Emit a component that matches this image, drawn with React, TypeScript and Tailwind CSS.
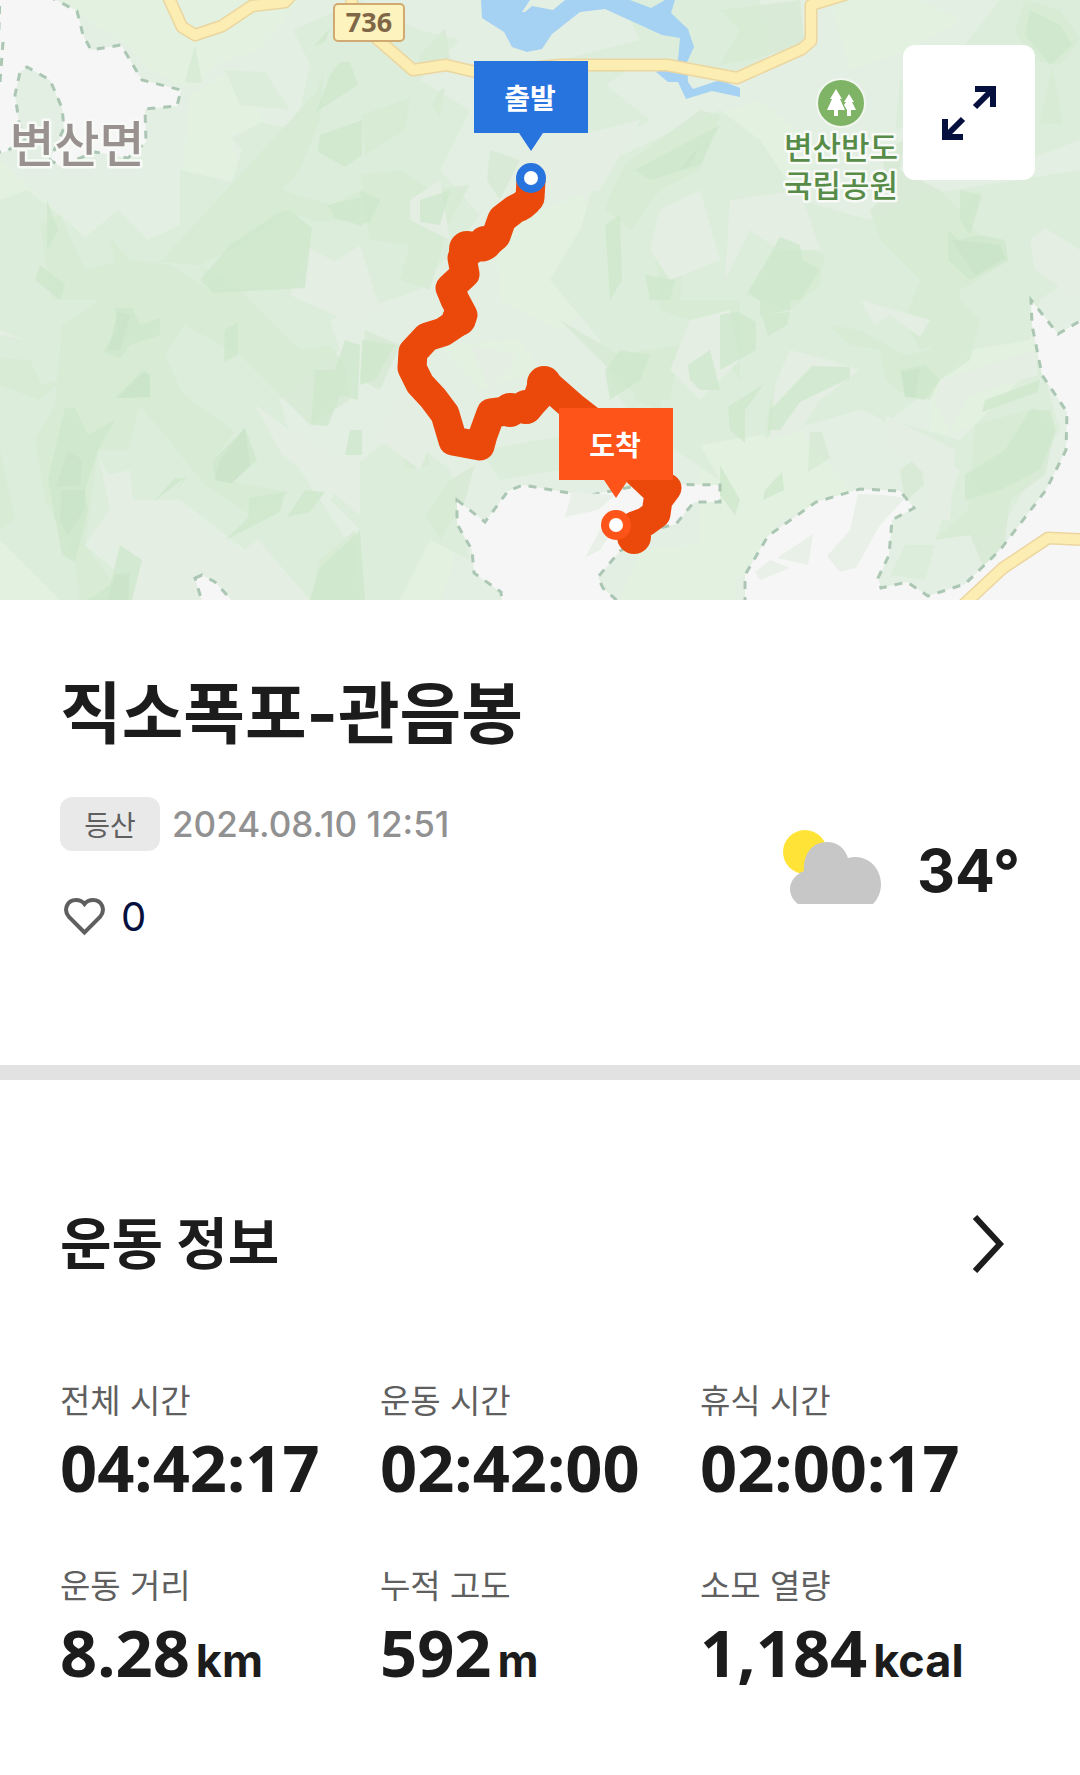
import { useState } from "react";

type Stat = { label: string; value: string; unit?: string };

const stats: Stat[] = [
  { label: "전체 시간", value: "04:42:17" },
  { label: "운동 시간", value: "02:42:00" },
  { label: "휴식 시간", value: "02:00:17" },
  { label: "운동 거리", value: "8.28", unit: "km" },
  { label: "누적 고도", value: "592", unit: "m" },
  { label: "소모 열량", value: "1,184", unit: "kcal" },
];

const route =
  "M531 180 L530 198 Q524 206 515 209 L502 219 L496 236 L483 247 L466 247 L462 258 L465 274 L450 288 L455 300 L463 315 L455 324 L443 332 L427 337 L413 352 L412 368 L420 384 L433 398 L445 414 L453 441 L480 446 L483 435 L491 413 L507 411 L512 408 L527 409 L538 397 L543 382 L548 385 L573 407 L600 428 L635 470 L653 487 L667 488 L658 500 L656 514 L645 522 L634 526 L635 538";

const terrain = [
  {
    // pale slopes
    fill: "#e2f1e0",
    d: "M60 0L300 0L260 50L220 62L190 90L150 70L130 48ZM190 95L235 68L265 122L232 135L240 182L208 175L215 200L200 218L180 205ZM0 160L60 215L85 235L118 210L150 240L190 225L160 262L90 280L0 270ZM380 90L440 120L420 170L370 180ZM495 230L580 195L640 260L560 330L500 300ZM700 120L760 100L820 150L780 230L720 220ZM850 70L910 50L960 20L920 0L830 0ZM440 345L520 340L540 370L480 390ZM930 350L1030 330L1040 370L990 420L930 440ZM700 440L800 430L850 490L780 520L740 580L700 560ZM0 540L60 560L100 600L0 600ZM380 520L440 470L455 560L440 600L370 600ZM640 550L740 540L735 600L620 600Z",
  },
  {
    fill: "#dceedb",
    d: "M0 200L27 190L60 215L85 237L118 210L148 240L180 225L180 170L232 182L242 150L232 138L262 122L295 130L310 65L293 30L360 0L420 30L460 40L420 80L470 110L440 170L480 215L420 290L330 320L340 350L280 400L300 470L360 560L330 600L310 600L258 540L245 550L180 500L130 500L110 510L85 545L150 600L60 600L0 540ZM225 70L265 72L290 110L240 105ZM620 0L760 0L770 60L730 75L640 60L600 90L560 60L640 40ZM600 165L720 110L760 140L800 200L870 220L920 195L1080 170L1080 270L1040 300L1030 340L970 350L930 390L890 420L860 410L790 430L700 445L720 480L660 440L620 400L600 340L550 280L580 230ZM540 90L600 80L650 120L600 150ZM895 130L930 120L1000 170L1080 140L1080 0L1000 0L960 50L900 80ZM400 430L450 470L470 560L430 540L400 600L330 600L360 530L330 500L350 470ZM480 450L600 430L640 460L560 470L500 480ZM780 340L870 360L890 420L960 440L1040 360L1060 430L1000 530L935 540L960 470L850 400ZM905 545L935 545L925 580L890 575Z",
  },
  {
    fill: "#d5ead3",
    opacity: 0.75,
    d: "M185 82L195 45L202 83ZM318 90L324 65L320 120L300 170L282 190L330 205L360 190L360 220L318 222L290 212L240 245L200 265L240 290L300 350L330 345L345 365L350 400L310 425L240 355L185 325L165 355L182 393L235 432L215 445L140 405L128 450L98 450L85 545L75 560L45 500L35 440L55 405L62 325L100 300L52 300L40 225L60 215L85 270L115 262L110 238L130 260L170 265L210 290L200 265L160 262ZM0 358L30 360L42 385L64 378L40 400L0 385ZM140 405L235 432L213 460L222 480L290 492L245 512L205 485ZM75 560L85 545L125 600L80 600ZM0 450L15 520L0 530ZM420 55L445 28L450 60L415 75ZM440 90L445 88L440 118L432 105ZM362 115L410 98L405 130L365 155ZM360 175L400 170L430 190L470 185L450 220L430 290L400 280L410 245L370 240ZM490 150L520 160L500 200L487 180ZM625 165L700 110L720 115L700 170L660 190L645 210L632 230L605 210L610 195ZM655 240L685 230L680 300L740 300L740 380L720 350L690 320L660 310ZM720 10L800 0L805 45L750 60L720 65L740 30ZM880 150L905 140L900 170L940 190L960 210L980 190L970 225L1010 260L960 290L960 340L920 350L905 320L920 280L880 240L870 210L890 190ZM1025 0L1060 10L1080 40L1060 65L1030 60L1015 30ZM1052 65L1063 125L1040 123ZM780 240L800 245L825 255L820 285L790 310L745 295L765 270ZM830 325L860 330L905 355L930 350L950 325L960 300L980 320L970 360L940 380L930 400L905 395L885 380L880 350L850 345ZM975 425L1035 408L1055 430L1045 475L1010 500L1005 540L985 570L970 535L935 540L968 510ZM770 400L815 365L850 367L850 380L815 395L800 425L765 438ZM810 432L822 432L830 458L808 472ZM400 420L420 415L430 465L405 470ZM450 480L475 465L465 500L440 540L425 515ZM560 320L620 355L680 345L670 400L640 400L600 360ZM640 350L665 350L660 410L635 400ZM900 470L920 455L924 485L905 502ZM320 560L355 530L360 600L310 600ZM365 330L400 345L380 390L360 380Z",
  },
  {
    // clearings
    fill: "#e4eee3",
    d: "M0 335L25 340L0 330ZM310 248L335 262L360 245L380 310L350 322L290 295ZM255 405L300 438L330 457L360 455L360 515L330 490L282 455ZM98 455L108 475L130 470L133 500L178 502L215 540L245 550L258 540L310 600L130 600L142 560L120 545L88 548L110 508ZM410 200L440 180L450 240L410 220ZM520 150L640 120L600 190L540 200ZM660 210L700 190L720 260L670 280L650 250ZM730 200L800 190L820 250L780 250L750 230L725 280ZM860 300L930 320L920 337L890 315L875 325ZM1030 240L1045 228L1080 250L1080 300L1035 270ZM940 380L1035 350L1038 375L970 395L950 430L935 400ZM885 415L955 450L950 520L925 520L930 480L890 440ZM775 385L790 350L830 360L860 370L820 400L800 430L770 440ZM470 345L520 355L490 390ZM690 320L730 310L740 360L700 400L670 370ZM430 385L440 420L420 470L380 440L400 400ZM520 500L560 520L540 560Z",
  },
  {
    // ridges
    fill: "#cde7cb",
    opacity: 0.7,
    d: "M280 212L290 210L312 228L305 288L213 293L200 280L230 245ZM315 45L330 28L325 42L315 46ZM340 62L350 62L358 85L316 112L330 75ZM320 135L362 120L362 155L345 167L318 152ZM328 205L362 197L362 226L335 218ZM47 200L58 230L47 250ZM40 265L65 285L60 300L35 280ZM115 308L132 308L140 325L160 318L160 335L130 345L120 358L103 352L118 330ZM115 398L142 371L150 374L150 397ZM65 408L75 408L88 435L115 420L98 450L85 490L88 510L75 562L62 555L48 480ZM213 460L245 428L257 460L232 483L215 480ZM250 498L285 492L280 512L225 540L248 518ZM305 490L325 492L310 512L287 517ZM315 370L335 370L345 340L360 345L358 400L340 395L328 426L311 425ZM345 455L350 430L362 430L362 455ZM170 500L185 478L153 502L175 478L186 478ZM120 545L142 560L132 600L88 600L110 585ZM225 330L238 322L238 355L224 362ZM310 600L320 568L360 530L365 600ZM420 200L450 190L440 225L420 222ZM360 190L380 200L370 222L360 225ZM635 170L720 125L700 165L650 180ZM605 225L620 215L622 280L610 300ZM645 275L675 280L670 300L650 300ZM780 237L800 245L803 260L820 270L800 300L758 300L748 292ZM948 230L958 240L980 235L1005 240L1008 260L970 280L948 260ZM960 190L982 195L970 235L960 220ZM1030 10L1060 25L1072 45L1050 65L1025 35ZM720 315L738 312L756 322L756 350L720 370ZM760 300L790 300L790 310L760 316ZM762 315L790 312L787 325L768 336ZM728 407L765 383L745 410L745 443L730 430ZM770 410L812 366L850 367L850 378L800 402L780 430L768 430ZM900 370L925 365L940 380L925 400L905 397ZM985 400L1040 380L1038 392L982 412ZM965 475L1005 450L1030 410L1050 410L1056 430L1040 470L1000 490L965 500ZM720 465L740 500L735 515L720 495ZM765 490L782 472L784 490L763 500ZM688 365L710 350L720 390L700 390L690 380ZM620 350L650 355L640 380L610 400L605 370ZM362 340L395 345L375 380L360 385Z",
  },
  {
    fill: "#c6e2c5",
    opacity: 0.5,
    d: "M118 312L130 315L120 350L108 350ZM145 371L150 380L150 397L118 398ZM68 450L82 460L80 485L56 487ZM62 490L85 490L84 510L68 535L60 520ZM220 460L245 428L250 465L232 483L215 480ZM115 575L130 572L128 600L108 600ZM952 240L1000 245L1005 258L975 275ZM700 145L710 125L690 165L680 170ZM902 372L920 368L915 397L905 396Z",
  },
];

const whiteAreas = [
  "M0 -5L50 -3L77 11L83 35L91 50L121 45L142 80L181 90L177 106L145 109L146 142L128 158L95 152L60 166L50 160L64 128L62 108L50 80L27 67L20 72L15 95L19 122L25 140L5 152L-5 152Z",
  "M457 500L485 522L508 491L523 485L586 496L646 484L720 485L720 502L694 502L676 524L660 528L620 551L598 577L603 588L622 605L502 605L501 592L474 573L472 550L457 524Z",
  "M745 605L745 575L768 536L816 502L860 489L900 491L914 508L892 520L889 555L878 578L881 588L907 582L928 596L965 584L1000 550L1046 490L1066 450L1067 412L1042 375L1032 325L1031 300L1058 334L1090 315L1090 605Z",
  "M195 578L202 575L215 582L236 605L203 605Z",
];

const roads = [
  "M166 -8L182 27L195 35L222 26L252 6L285 2L298 -12",
  "M350 -8L355 20L382 43L413 70L446 65L480 73L560 65L667 65L737 78L802 49L811 41L811 5L860 -10",
  "M960 608L1003 568L1048 538L1090 540",
];

function Flag({ x, y, label, color }: { x: number; y: number; label: string; color: string }) {
  return (
    <g>
      <circle cx={x} cy={y} r="15" fill={color} />
      <circle cx={x} cy={y} r="7" fill="#fff" />
      <path
        d={`M${x - 57} ${y - 117}h114v72h-45l-12 18l-12 -18h-45z`}
        fill={color}
      />
      <text x={x - 1} y={y - 69} textAnchor="middle" fontSize="28" fontWeight="700" fill="#fff">
        {label}
      </text>
    </g>
  );
}

function CourseMap() {
  return (
    <svg viewBox="0 0 1080 600" className="block h-auto w-full" role="img" aria-label="코스 지도">
      <rect width="1080" height="600" fill="#e4efe3" />
      {terrain.map((t) => (
        <path key={t.fill} d={t.d} fill={t.fill} opacity={t.opacity} />
      ))}

      {whiteAreas.map((d) => (
        <path
          key={d}
          d={d}
          fill="#f6f6f6"
          stroke="#abc7b3"
          strokeWidth="3"
          strokeDasharray="8 8"
        />
      ))}
      <path
        d="M858 494L886 495L905 498L880 525L856 568L840 572L827 556L850 530ZM777 558L813 534L808 565ZM755 572L770 560L790 568L760 580ZM565 517L572 492L615 495L598 510ZM585 558L600 530L610 535L600 550Z"
        fill="#e8f0e7"
      />
      <path d="M3 42L0 82" stroke="#abc7b3" strokeWidth="3" strokeDasharray="8 8" />

      <path
        d="M481 0L482 18L504 32L512 47L527 52L542 49L552 34L580 12L605 9L662 35L680 38L678 60L656 72L668 82L678 82L686 99L712 91L740 97L740 88L720 80L693 89L688 82L687 62L694 47L688 29L671 13L675 0L665 0L651 8L630 0L565 0L553 10L532 6L525 12L522 12L530 0Z"
        fill="#a5d1f3"
      />

      <g fill="none" strokeLinejoin="round">
        {roads.map((d) => (
          <path key={d} d={d} stroke="#ecd6a0" strokeWidth="13" />
        ))}
        {roads.map((d) => (
          <path key={d} d={d} stroke="#fcedb3" strokeWidth="10" />
        ))}
      </g>

      <rect x="334" y="4" width="70" height="37" rx="4" fill="#fdf3bf" stroke="#d0aa70" strokeWidth="2" />
      <text
        x="369"
        y="32"
        textAnchor="middle"
        fontSize="27"
        fontWeight="700"
        fill="#7f6647"
        className="font-['Noto_Sans',sans-serif]"
      >
        736
      </text>

      <g stroke="#f7faf6" strokeWidth="5" strokeLinejoin="round" paintOrder="stroke" textAnchor="middle">
        <text x="77" y="162" fontSize="49" fontWeight="500" fill="#999190">
          변산면
        </text>
        <g fill="#578c48" fontSize="31" fontWeight="500">
          <text x="841" y="159">변산반도</text>
          <text x="841" y="197">국립공원</text>
        </g>
      </g>
      <circle cx="841" cy="103" r="24" fill="#7fb366" stroke="#f1f7ef" strokeWidth="2" />
      <path
        d="M836 89L842 99L840 99L845 110L838 110L838 116L834 116L834 110L827 110L832 99L830 99ZM849 94L854 102L852 102L856 110L851 110L851 116L847 116L847 110L844 105L846 102L844 102Z"
        fill="#fff"
      />

      <path
        d={route}
        fill="none"
        stroke="#eb490b"
        strokeWidth="29"
        strokeLinecap="round"
        strokeLinejoin="round"
      />
      {/* spots where the track doubles back on itself */}
      <g fill="#eb490b">
        <circle cx="467" cy="249" r="18" />
        <circle cx="485" cy="243" r="17" />
        <circle cx="459" cy="319" r="17" />
        <circle cx="510" cy="410" r="17" />
        <circle cx="526" cy="407" r="17" />
        <circle cx="544" cy="383" r="17" />
        <circle cx="634" cy="537" r="17" />
      </g>
      <Flag x={531} y={178} label="출발" color="#2874df" />
      <Flag x={616} y={525} label="도착" color="#ff5419" />
    </svg>
  );
}

function WeatherIcon() {
  return (
    <svg width="98" height="74" viewBox="0 0 98 74" aria-hidden="true">
      <circle cx="22" cy="22" r="22" fill="#ffe437" />
      <path
        d="M15 74C10 70 7 65 7 59C7 51 13 44 21 41C20 23 30 12 44 12C54 12 62 18 65 28C83 23 98 37 98 54C98 62 95 69 90 74Z"
        fill="#c7c7c7"
      />
    </svg>
  );
}

export default function App() {
  const [liked, setLiked] = useState(false);

  return (
    <main className="bg-white font-['Inter','Noto_Sans_CJK_KR',sans-serif] text-[#1c1c1c]">
      <div className="relative">
        <CourseMap />
        <button
          type="button"
          aria-label="지도 확대"
          className="absolute top-[45px] right-[45px] flex h-[135px] w-[132px] items-center justify-center rounded-xl bg-white"
        >
          <svg width="54" height="56" viewBox="0 0 54 56" fill="none" stroke="#06103f" strokeWidth="6">
            <path d="M33 4H51V22M50 5L33 22" />
            <path d="M3 34V52H21M4 51L21 34" />
          </svg>
        </button>
      </div>

      <section className="px-[60px] pt-[74px] pb-32">
        <h1 className="text-[67px] leading-[80px] font-bold">직소폭포-관음봉</h1>
        <div className="mt-[43px] flex items-center justify-between">
          <div>
            <div className="flex items-center gap-3">
              <span className="flex h-[54px] w-[100px] items-center justify-center rounded-xl bg-[#e9e9e9] pt-1 text-[28px] text-[#5f5f5f]">
                등산
              </span>
              <time className="text-[35px] leading-[54px] font-medium text-[#919191]">
                2024.08.10 12:51
              </time>
            </div>
            <button
              type="button"
              aria-pressed={liked}
              aria-label="좋아요"
              onClick={() => setLiked(!liked)}
              className="mt-[46px] flex h-10 items-center gap-4 pl-1"
            >
              <svg
                width="41"
                height="38"
                viewBox="0 0 41 38"
                fill={liked ? "#5f5f5f" : "none"}
                stroke="#5f5f5f"
                strokeWidth="4"
              >
                <path d="M20.500 34.500L5 19C-1 12 3 2 12 2C16 2 19 4 20.500 6C22 4 25 2 29 2C38 2 42 12 36 19Z" />
              </svg>
              <span className="text-[40px] leading-10 text-[#06103f]">{liked ? 1 : 0}</span>
            </button>
          </div>
          <div className="flex items-center gap-9">
            <WeatherIcon />
            <span className="pt-2 text-[59px] leading-[72px] font-bold">34°</span>
          </div>
        </div>
      </section>

      <hr className="h-[15px] border-0 bg-[#e2e2e2]" />

      <section className="px-[60px] pt-[124px] pb-[85px]">
        <div className="flex items-center justify-between">
          <h2 className="text-[56px] leading-[80px] font-bold">운동 정보</h2>
          <button type="button" aria-label="운동 정보 더보기" className="pr-4">
            <svg width="31" height="58" viewBox="0 0 31 58" fill="none" stroke="#1c1c1c" strokeWidth="6">
              <path d="M2 2L27 29L2 56" />
            </svg>
          </button>
        </div>
        <dl className="mt-[97px] grid grid-cols-3 gap-y-[63px]">
          {stats.map((stat) => (
            <div key={stat.label}>
              <dt className="text-[33px] leading-10 text-[#5f5f5f]">{stat.label}</dt>
              <dd className="mt-2.5 flex items-baseline gap-1.5 font-['Noto_Sans',sans-serif] text-[65px] leading-[72px] font-bold whitespace-nowrap">
                {stat.value}
                {stat.unit && (
                  <span className="font-['Inter',sans-serif] text-[45px] font-bold">{stat.unit}</span>
                )}
              </dd>
            </div>
          ))}
        </dl>
      </section>
    </main>
  );
}
